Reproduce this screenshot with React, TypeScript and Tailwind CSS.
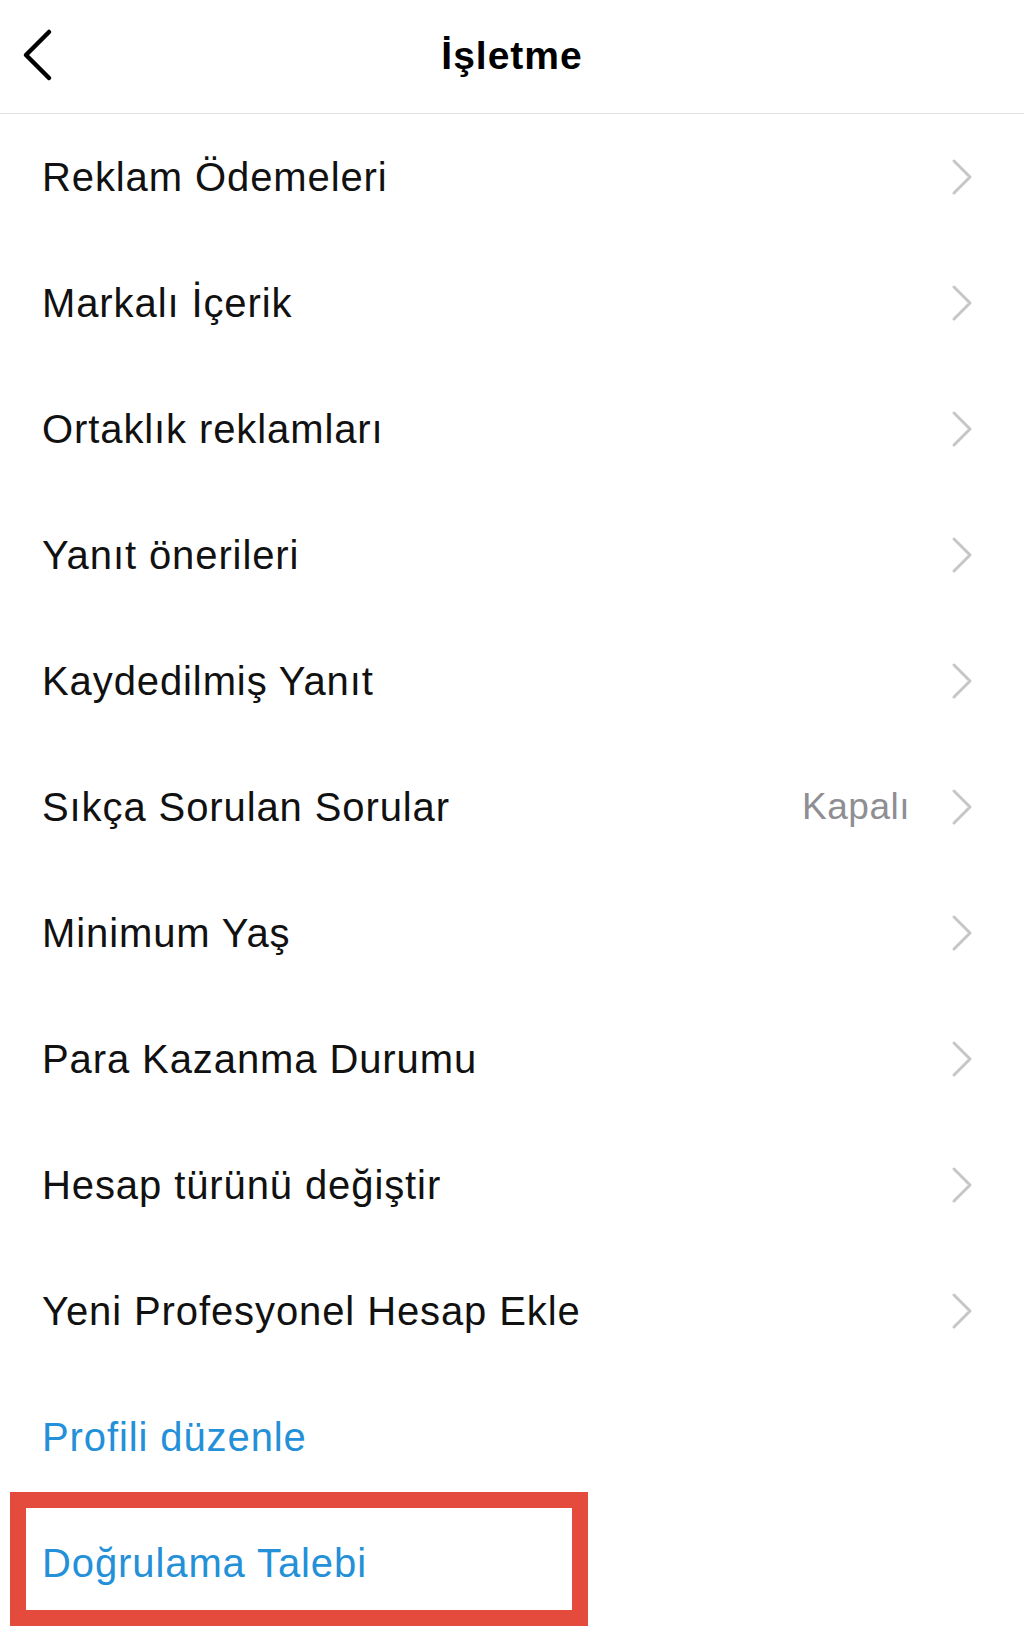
const ROWS = [
  { label: 'Reklam Ödemeleri' },
  { label: 'Markalı İçerik' },
  { label: 'Ortaklık reklamları' },
  { label: 'Yanıt önerileri' },
  { label: 'Kaydedilmiş Yanıt' },
  { label: 'Sıkça Sorulan Sorular', value: 'Kapalı' },
  { label: 'Minimum Yaş' },
  { label: 'Para Kazanma Durumu' },
  { label: 'Hesap türünü değiştir' },
  { label: 'Yeni Profesyonel Hesap Ekle' },
]

function Chevron() {
  return (
    <svg width="22" height="38" viewBox="0 0 22 38" fill="none" className="shrink-0">
      <path d="M3 3 L19 19 L3 35" stroke="#c6c6c8" strokeWidth="3" strokeLinecap="round" strokeLinejoin="round" />
    </svg>
  )
}

function BackArrow() {
  return (
    <svg width="36" height="54" viewBox="0 0 36 54" fill="none">
      <path d="M28 4 L5 27 L28 50" stroke="#000" strokeWidth="4.5" strokeLinecap="round" strokeLinejoin="round" />
    </svg>
  )
}

export default function App() {
  return (
    <div className="w-[1024px] h-[1641px] bg-white overflow-hidden font-['Liberation_Sans',Arial,sans-serif]">
      <header className="relative h-[114px] flex items-center justify-center border-b border-[#e3e3e3]">
        <button className="absolute left-[21px] top-[28px]">
          <BackArrow />
        </button>
        <h1 className="text-[39px] font-bold tracking-[1px] text-black">İşletme</h1>
      </header>

      <ul>
        {ROWS.map((r) => (
          <li key={r.label} className="h-[126px] flex items-center pl-[42px] pr-[51px]">
            <span className="flex-1 text-[40px] tracking-[0.9px] text-[#111]">{r.label}</span>
            {r.value && <span className="mr-[41px] text-[37px] tracking-[0.5px] text-[#8e8e93]">{r.value}</span>}
            <Chevron />
          </li>
        ))}
        <li className="h-[126px] flex items-center pl-[42px]">
          <span className="text-[40px] tracking-[0.9px] text-[#2490d8]">Profili düzenle</span>
        </li>
        <li className="relative h-[126px] flex items-center pl-[42px]">
          <span className="text-[40px] tracking-[0.9px] text-[#2490d8]">Doğrulama Talebi</span>
          <div className="absolute left-[10px] top-[-8px] w-[578px] h-[134px] border-[16px] border-[#e54b3d] pointer-events-none" />
        </li>
      </ul>
    </div>
  )
}
